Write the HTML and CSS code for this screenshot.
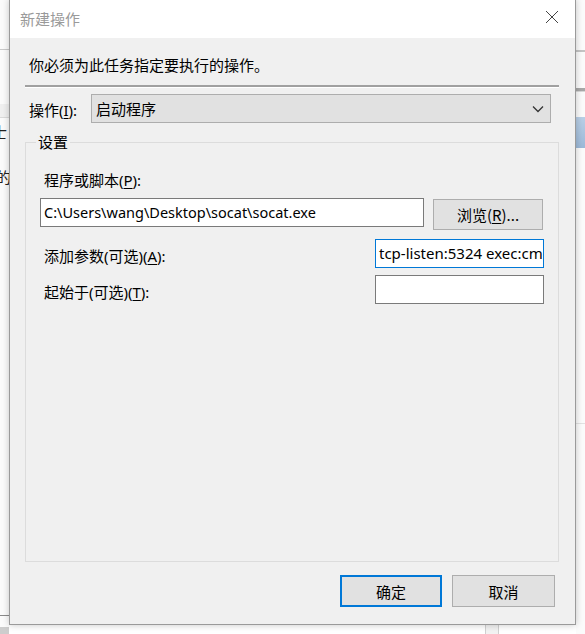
FILE: index.html
```html
<!DOCTYPE html>
<html lang="zh-CN">
<head>
<meta charset="utf-8">
<title>新建操作</title>
<link rel="stylesheet" href="styles.css">
</head>
<body>
<div class="desktop">
  <div class="bgwin bg-left">
    <div class="bl-line1"></div>
    <div class="bl-band"></div>
    <div class="bl-char c1">士</div>
    <div class="bl-char c2">的</div>
    <div class="bl-line2"></div>
    <div class="bl-bar"></div>
  </div>
  <div class="bgwin bg-right">
    <div class="br-line1"></div>
    <div class="br-band"></div>
    <div class="br-blue"></div>
    <div class="br-line2"></div>
  </div>
  <div class="bgwin bg-bottom"></div>

  <div class="dialog">
    <div class="titlebar">
      <span class="title">新建操作</span>
      <svg class="close" width="14" height="14" viewBox="0 0 14 14"><path d="M1 1L13 13M13 1L1 13" stroke="#444" stroke-width="1" fill="none"/></svg>
    </div>
    <div class="content">
      <p class="intro">你必须为此任务指定要执行的操作。</p>
      <div class="sep"></div>
      <div class="action-row">
        <span class="action-label">操作(<u>I</u>):</span>
        <div class="select">
          <span>启动程序</span>
          <svg class="chev" width="12" height="8" viewBox="0 0 12 8"><path d="M1 1.5L6 6.5L11 1.5" stroke="#333" stroke-width="1.3" fill="none"/></svg>
        </div>
      </div>
      <div class="group">
        <div class="legend">设置</div>
        <div class="field-label">程序或脚本(<u>P</u>):</div>
        <div class="prog-row">
          <div class="input prog">C:\Users\wang\Desktop\socat\socat.exe</div>
          <div class="btn browse">浏览(<u>R</u>)...</div>
        </div>
        <div class="opt-row first">
          <span class="opt-label">添加参数(可选)(<u>A</u>):</span>
          <div class="input small focus">tcp-listen:5324 exec:cmd.exe,pty,stderr</div>
        </div>
        <div class="opt-row second">
          <span class="opt-label">起始于(可选)(<u>T</u>):</span>
          <div class="input small"></div>
        </div>
      </div>
      <div class="buttons">
        <div class="btn action default">确定</div>
        <div class="btn action">取消</div>
      </div>
    </div>
  </div>
</div>
</body>
</html>
```
FILE: styles.css
```css
* { box-sizing: border-box; }
html, body {
  margin: 0;
  padding: 0;
  width: 585px;
  height: 634px;
  overflow: hidden;
  background: #ffffff;
  font-family: "Noto Sans", "Noto Sans CJK SC", sans-serif;
  font-size: 15px;
  color: #000;
}
.desktop {
  position: relative;
  width: 585px;
  height: 634px;
  overflow: hidden;
}
.bgwin { position: absolute; overflow: hidden; }
.bg-left { left: 0; top: 0; width: 9px; height: 634px; background: #fbfbfb; }
.bl-line1 { position: absolute; left: 0; top: 49px; width: 9px; height: 1px; background: #c9c9c9; }
.bl-band { position: absolute; left: 0; top: 104px; width: 9px; height: 14px; background: #f0f0f0; border-bottom: 1px solid #dadada; }
.bl-char { position: absolute; left: -4px; font-family: "Noto Sans CJK SC", sans-serif; font-size: 15px; line-height: 20px; color: #222; }
.c1 { top: 122px; left: -8px; }
.c2 { top: 167px; }
.bl-line2 { position: absolute; left: 0; top: 615px; width: 9px; height: 1px; background: #8a8a8a; }
.bl-bar { position: absolute; left: 0; top: 627px; width: 36px; height: 7px; background: #cdcdcd; border-right: 1px solid #bbb; }
.bg-right { left: 576px; top: 0; width: 9px; height: 634px; background: #fbfbfb; }
.br-line1 { position: absolute; left: 0; top: 50px; width: 9px; height: 2px; background: #c4c4c4; }
.br-band { position: absolute; left: 0; top: 88px; width: 9px; height: 4px; background: #a8a8a8; border-bottom: 1px solid #d8d8d8; }
.br-blue { position: absolute; left: 0; top: 117px; width: 9px; height: 31px; background: linear-gradient(#b9cfe6, #9cb9d8); }
.br-line2 { position: absolute; left: 0; top: 423px; width: 9px; height: 1px; background: #e2e2e2; }
.bg-bottom { left: 485px; top: 620px; width: 14px; height: 14px; background: #f2f2f2; border-left: 1px solid #d0d0d0; border-right: 1px solid #d0d0d0; }

.dialog {
  position: absolute;
  left: 9px;
  top: -1px;
  width: 567px;
  height: 626px;
  background: #f0f0f0;
  border: 1px solid #9a9a9a;
  box-shadow: 0 0 7px rgba(0,0,0,0.22);
  display: flex;
  flex-direction: column;
}
.titlebar {
  height: 38px;
  background: #fff;
  display: flex;
  align-items: center;
  justify-content: space-between;
  padding: 0 16px 2px 10px;
}
.title {
  font-family: "Noto Sans CJK SC", sans-serif;
  font-size: 15px;
  color: #9a9a9a;
}
.close { display: block; margin-top: -3px; }

.content { display: flex; flex-direction: column; flex: 1; }
.intro {
  margin: 17px 0 0 19px;
  line-height: 20px;
  font-family: "Noto Sans CJK SC", sans-serif;
}
.sep {
  margin: 10px 16px 0 15px;
  height: 3px;
  border-top: 2px solid #a0a0a0;
  border-bottom: 1px solid #ffffff;
  background: #c8c8c8;
}
.action-row {
  margin-top: 6px;
  padding-left: 19px;
  display: flex;
  align-items: center;
}
.action-label { width: 62px; line-height: 20px; padding-top: 2px; }
.select {
  width: 460px;
  height: 29px;
  background: #e1e1e1;
  border: 1px solid #adadad;
  display: flex;
  align-items: center;
  justify-content: space-between;
  padding: 0 6px 0 4px;
}
.select span { font-family: "Noto Sans CJK SC", sans-serif; line-height: 20px; padding-top: 1px; }
.chev { display: block; }

.group {
  margin: 19px 16px 0 15px;
  height: 420px;
  border: 1px solid #dcdcdc;
  padding-left: 14px;
  display: flex;
  flex-direction: column;
}
.legend {
  align-self: flex-start;
  margin: -11px 0 0 -4px;
  padding: 0 2px;
  background: #f0f0f0;
  line-height: 20px;
  font-family: "Noto Sans CJK SC", sans-serif;
}
.field-label {
  margin: 18px 0 0 4px;
  line-height: 20px;
}
.prog-row {
  margin-top: 8px;
  display: flex;
  align-items: flex-start;
}
.input {
  height: 29px;
  background: #fff;
  border: 1px solid #7a7a7a;
  padding: 0 3px;
  font-size: 14.5px;
  line-height: 27px;
  white-space: nowrap;
  overflow: hidden;
}
.input.prog { width: 384px; }
.input.focus { border-color: #0078d7; font-size: 15px; }
.btn {
  background: #e1e1e1;
  border: 1px solid #adadad;
  display: flex;
  align-items: center;
  justify-content: center;
  font-family: "Noto Sans CJK SC", sans-serif;
}
.browse {
  margin: 1px 0 0 9px;
  width: 110px;
  height: 31px;
}
.opt-row {
  display: flex;
  align-items: center;
  padding-right: 14px;
}
.opt-row.first { margin-top: 9px; }
.opt-row.second { margin-top: 7px; }
.opt-label { flex: 1; margin-left: 4px; line-height: 20px; padding-top: 5px; }
.input.small { width: 169px; }

.buttons {
  margin: 13px 20px 0 0;
  display: flex;
  justify-content: flex-end;
  gap: 10px;
}
.action { width: 103px; height: 32px; }
.action.default { width: 102px; border: 2px solid #0078d7; }
u { text-decoration: underline; text-underline-offset: 2px; }
```
